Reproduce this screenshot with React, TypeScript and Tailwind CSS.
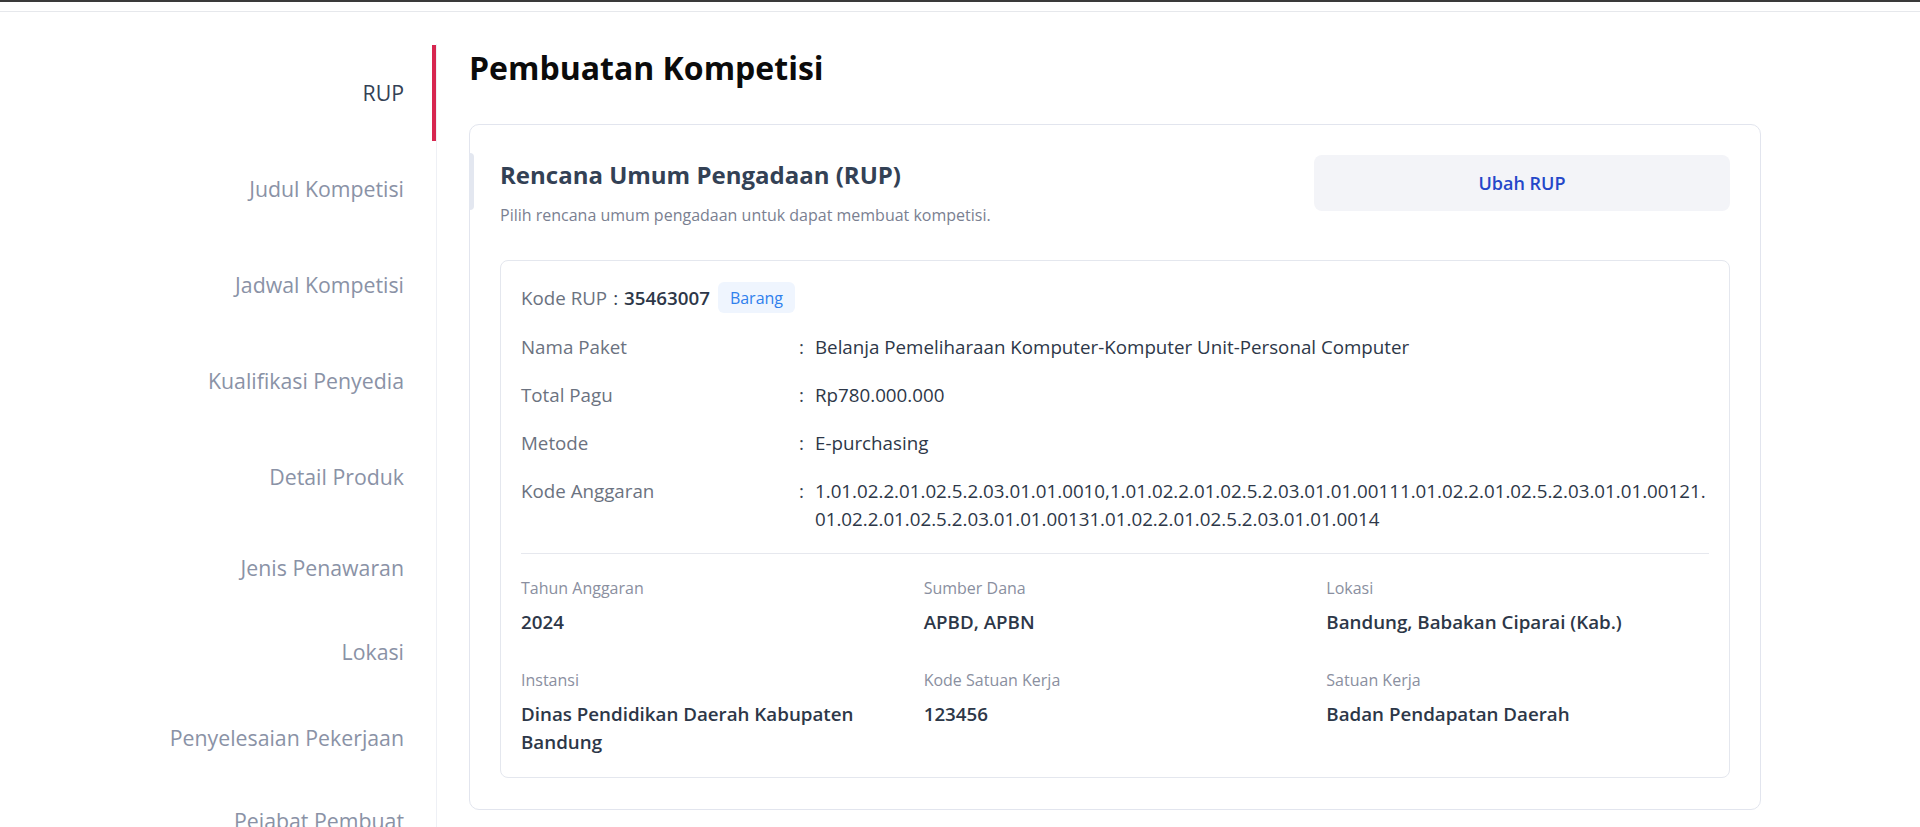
import { ReactNode } from 'react'

const STEPS = [
  { label: 'RUP', h: 'h-[96px]', active: true },
  { label: 'Judul Kompetisi', h: 'h-[96px]' },
  { label: 'Jadwal Kompetisi', h: 'h-[96px]' },
  { label: 'Kualifikasi Penyedia', h: 'h-[96px]' },
  { label: 'Detail Produk', h: 'h-[96px]' },
  { label: 'Jenis Penawaran', h: 'h-[86px]' },
  { label: 'Lokasi', h: 'h-[82px]' },
  { label: 'Penyelesaian Pekerjaan', h: 'h-[90px]' },
  { label: 'Pejabat Pembuat', h: 'h-[76px]' },
]

const SUMMARY = [
  { k: 'Tahun Anggaran', v: '2024' },
  { k: 'Sumber Dana', v: 'APBD, APBN' },
  { k: 'Lokasi', v: 'Bandung, Babakan Ciparai (Kab.)' },
  { k: 'Instansi', v: 'Dinas Pendidikan Daerah Kabupaten Bandung' },
  { k: 'Kode Satuan Kerja', v: '123456' },
  { k: 'Satuan Kerja', v: 'Badan Pendapatan Daerah' },
]

function Row({ label, children }: { label: string; children: ReactNode }) {
  return (
    <div className="flex text-[18.75px] leading-7">
      <div className="w-[278px] shrink-0 text-[#6b7280]">{label}</div>
      <div className="w-4 shrink-0 text-[#374151]">:</div>
      <div className="flex-1 text-[#2d3748]">{children}</div>
    </div>
  )
}

export default function App() {
  return (
    <div className="min-h-screen bg-white" style={{ fontFamily: '"Open Sans", "Noto Sans", sans-serif' }}>
      <div className="h-3 border-t-2 border-b border-t-[#3a3a3a] border-b-[#e6e8ec]" />

      <div className="flex">
        {/* Steps */}
        <aside className="w-[437px] shrink-0 pt-8">
          <div className="border-r border-[#eef0f5] pt-px">
            {STEPS.map(s => (
              <div
                key={s.label}
                className={`${s.h} flex items-center justify-end pr-7 text-[21.3px] border-r-4 ${
                  s.active ? 'border-[#d7264f] text-[#334155]' : 'border-transparent text-[#8a92a6]'
                }`}
              >
                {s.label}
              </div>
            ))}
          </div>
        </aside>

        {/* Main */}
        <main className="w-[1292px] ml-8 pt-8">
          <h1 className="text-[32px] leading-[48px] font-bold text-[#0b0b0b]">Pembuatan Kompetisi</h1>

          <div className="relative mt-8 rounded-[10px] border border-[#e2e5ee] px-[30px] pt-[30px] pb-[31px]">
            <div className="absolute -left-px top-[28px] h-[57px] w-[5px] rounded-r bg-[#e3e7f0]" />

            <div className="flex items-start justify-between">
              <div className="pt-1">
                <h2 className="text-2xl leading-8 font-bold text-[#334155]">Rencana Umum Pengadaan (RUP)</h2>
                <p className="mt-3 text-base leading-6 text-[#7a8091]">
                  Pilih rencana umum pengadaan untuk dapat membuat kompetisi.
                </p>
              </div>
              <button className="w-[416px] h-14 rounded-lg bg-[#f3f4f8] text-lg font-semibold text-[#2447c9]">
                Ubah RUP
              </button>
            </div>

            <div className="mt-[33px] rounded-lg border border-[#e4e7ee] px-5 pt-[21px] pb-[21px]">
              <div className="flex flex-col gap-5">
                <div className="flex items-center text-[18.75px] leading-7">
                  <span className="text-[#6b7280]">Kode RUP</span>
                  <span className="ml-1.5 text-[#374151]">:</span>
                  <span className="ml-1.5 font-semibold text-[#2d3748]">35463007</span>
                  <span className="ml-2 flex h-[31px] items-center rounded-md bg-[#eff5fe] px-3 text-base text-[#2f80ed]">
                    Barang
                  </span>
                </div>
                <Row label="Nama Paket">Belanja Pemeliharaan Komputer-Komputer Unit-Personal Computer</Row>
                <Row label="Total Pagu">Rp780.000.000</Row>
                <Row label="Metode">E-purchasing</Row>
                <Row label="Kode Anggaran">
                  1.01.02.2.01.02.5.2.03.01.01.0010,1.01.02.2.01.02.5.2.03.01.01.00111.01.02.2.01.02.5.2.03.01.01.00121.
                  <br />
                  01.02.2.01.02.5.2.03.01.01.00131.01.02.2.01.02.5.2.03.01.01.0014
                </Row>
              </div>

              <div className="mt-5 mb-[22px] border-t border-[#e6e8ee]" />

              <div className="grid grid-cols-3 gap-x-5 gap-y-8">
                {SUMMARY.map(item => (
                  <div key={item.k}>
                    <div className="text-base leading-6 text-[#8a8fa0]">{item.k}</div>
                    <div className="mt-2 text-[18.75px] leading-7 font-semibold text-[#2d3748]">{item.v}</div>
                  </div>
                ))}
              </div>
            </div>
          </div>
        </main>
      </div>
    </div>
  )
}
